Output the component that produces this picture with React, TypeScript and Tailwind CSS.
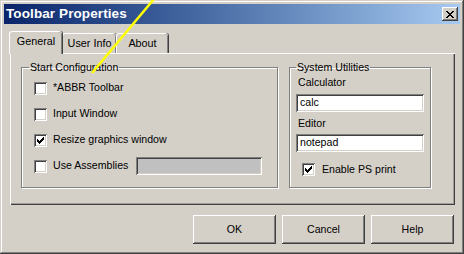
import React from 'react';

const font = '"Liberation Sans", Arial, sans-serif';

const Check = () => (
  <svg width="7" height="7" viewBox="0 0 7 7" className="block">
    <path d="M0 2h1v1h1v1h1v-1h1v-1h1v-1h1v-1h1v3h-1v1h-1v1h-1v1h-1v1h-1v-1h-1v-1h-1z" fill="#000" />
  </svg>
);

const CheckBox = ({ checked }: { checked?: boolean }) => (
  <div className="w-[13px] h-[13px] bg-white flex items-center justify-center shrink-0 shadow-[inset_1px_1px_#808080,inset_-1px_-1px_#ffffff,inset_2px_2px_#404040,inset_-2px_-2px_#d4d0c8]">
    {checked && <Check />}
  </div>
);

const TextBox = ({ value, className }: { value?: string; className?: string }) => (
  <div
    className={`h-[18px] flex items-center pl-[4px] text-[10.6px] text-black shadow-[inset_1px_1px_#808080,inset_-1px_-1px_#ffffff,inset_2px_2px_#404040,inset_-2px_-2px_#d4d0c8] ${className ?? ''}`}
  >
    {value}
  </div>
);

const Button = ({ label }: { label: string }) => (
  <button className="w-[83px] h-[29px] bg-[#d4d0c8] text-[10.6px] text-black shadow-[inset_-1px_-1px_#404040,inset_1px_1px_#ffffff,inset_-2px_-2px_#808080]">
    {label}
  </button>
);

const Tab = ({ label, active, width }: { label: string; active?: boolean; width: string }) => (
  <div
    className={`${width} ${
      active ? 'h-[23px] -mb-[1px] z-10 pb-[3px]' : 'h-[20px]'
    } relative bg-[#d4d0c8] rounded-tl-[3px] rounded-tr-[3px] border-l border-t border-white shadow-[inset_-1px_0_#808080,1px_0_#404040] flex items-center justify-center text-[10.8px] text-black`}
  >
    {label}
  </div>
);

const CheckRow = ({ label, checked, children }: { label: string; checked?: boolean; children?: React.ReactNode }) => (
  <div className="h-[26px] flex items-center pl-[12px]">
    <CheckBox checked={checked} />
    <span className="ml-[6px] text-[10.6px] text-black">{label}</span>
    {children}
  </div>
);

export default function App() {
  return (
    <div
      className="relative w-[464px] h-[254px] bg-[#d4d0c8] p-[4px] flex flex-col shadow-[inset_-1px_-1px_#404040,inset_1px_1px_#d4d0c8,inset_-2px_-2px_#808080,inset_2px_2px_#ffffff] overflow-hidden"
      style={{ fontFamily: font }}
    >
      {/* Title bar */}
      <div className="h-[20px] flex items-center justify-between bg-gradient-to-r from-[#0a246a] to-[#a6caf0] pl-[2px] pr-[2px]">
        <span className="text-white font-bold text-[13.5px] tracking-[0.1px]">Toolbar Properties</span>
        <div className="w-[16px] h-[14px] bg-[#d4d0c8] flex items-center justify-center shadow-[inset_-1px_-1px_#404040,inset_1px_1px_#ffffff,inset_-2px_-2px_#808080]">
          <svg width="8" height="7" viewBox="0 0 8 7">
            <path d="M0 0h2v1h1v1h2v-1h1v-1h2v1h-1v1h-1v1h-1v1h1v1h1v1h1v1h-2v-1h-1v-1h-2v1h-1v1h-2v-1h1v-1h1v-1h1v-1h-1v-1h-1v-1h-1z" fill="#000" />
          </svg>
        </div>
      </div>

      {/* Body */}
      <div className="flex flex-col pl-[6px] pr-[5px]">
        {/* Tabs */}
        <div className="flex items-end mt-[7px] -ml-[1px]">
          <Tab label="General" active width="w-[53px]" />
          <Tab label="User Info" width="w-[54px]" />
          <Tab label="About" width="w-[52px]" />
        </div>

        {/* Tab panel */}
        <div className="h-[152px] flex gap-[11px] pl-[11px] pt-[8px] shadow-[inset_1px_1px_#ffffff,inset_-1px_-1px_#404040,inset_-2px_-2px_#a09c9c]">
          <fieldset className="w-[257px] h-[127px] border border-[#808080] shadow-[1px_1px_#ffffff,inset_1px_1px_#ffffff] pl-[7px] pr-0">
            <legend className="px-[1px] text-[10.6px] leading-[13px] text-black">Start Configuration</legend>
            <div className="flex flex-col -ml-[7px] pt-[1px]">
              <CheckRow label="*ABBR Toolbar" />
              <CheckRow label="Input Window" />
              <CheckRow label="Resize graphics window" checked />
              <CheckRow label="Use Assemblies">
                <TextBox className="w-[126px] ml-[8px] bg-[#c0c0c0]" />
              </CheckRow>
            </div>
          </fieldset>

          <fieldset className="w-[142px] h-[127px] border border-[#808080] shadow-[1px_1px_#ffffff,inset_1px_1px_#ffffff] pl-[6px] pr-0">
            <legend className="px-[1px] text-[10.6px] leading-[13px] text-black">System Utilities</legend>
            <div className="flex flex-col pr-[6px]">
              <span className="text-[10.6px] leading-[13px] text-black mt-[2px] pl-[2px]">Calculator</span>
              <TextBox value="calc" className="bg-white mt-[5px]" />
              <span className="text-[10.6px] leading-[13px] text-black mt-[5px] pl-[2px]">Editor</span>
              <TextBox value="notepad" className="bg-white mt-[4px]" />
              <div className="flex items-center mt-[10px] pl-[6px]">
                <CheckBox checked />
                <span className="ml-[7px] text-[10.6px] text-black">Enable PS print</span>
              </div>
            </div>
          </fieldset>
        </div>

        {/* Buttons */}
        <div className="flex justify-end gap-[6px] mt-[10px] pr-[1px]">
          <Button label="OK" />
          <Button label="Cancel" />
          <Button label="Help" />
        </div>
      </div>

      {/* Yellow annotation line */}
      <svg className="absolute inset-0 pointer-events-none" width="464" height="254">
        <line x1="154" y1="-1" x2="92" y2="73" stroke="#ffff00" strokeWidth="2.5" />
      </svg>
    </div>
  );
}
